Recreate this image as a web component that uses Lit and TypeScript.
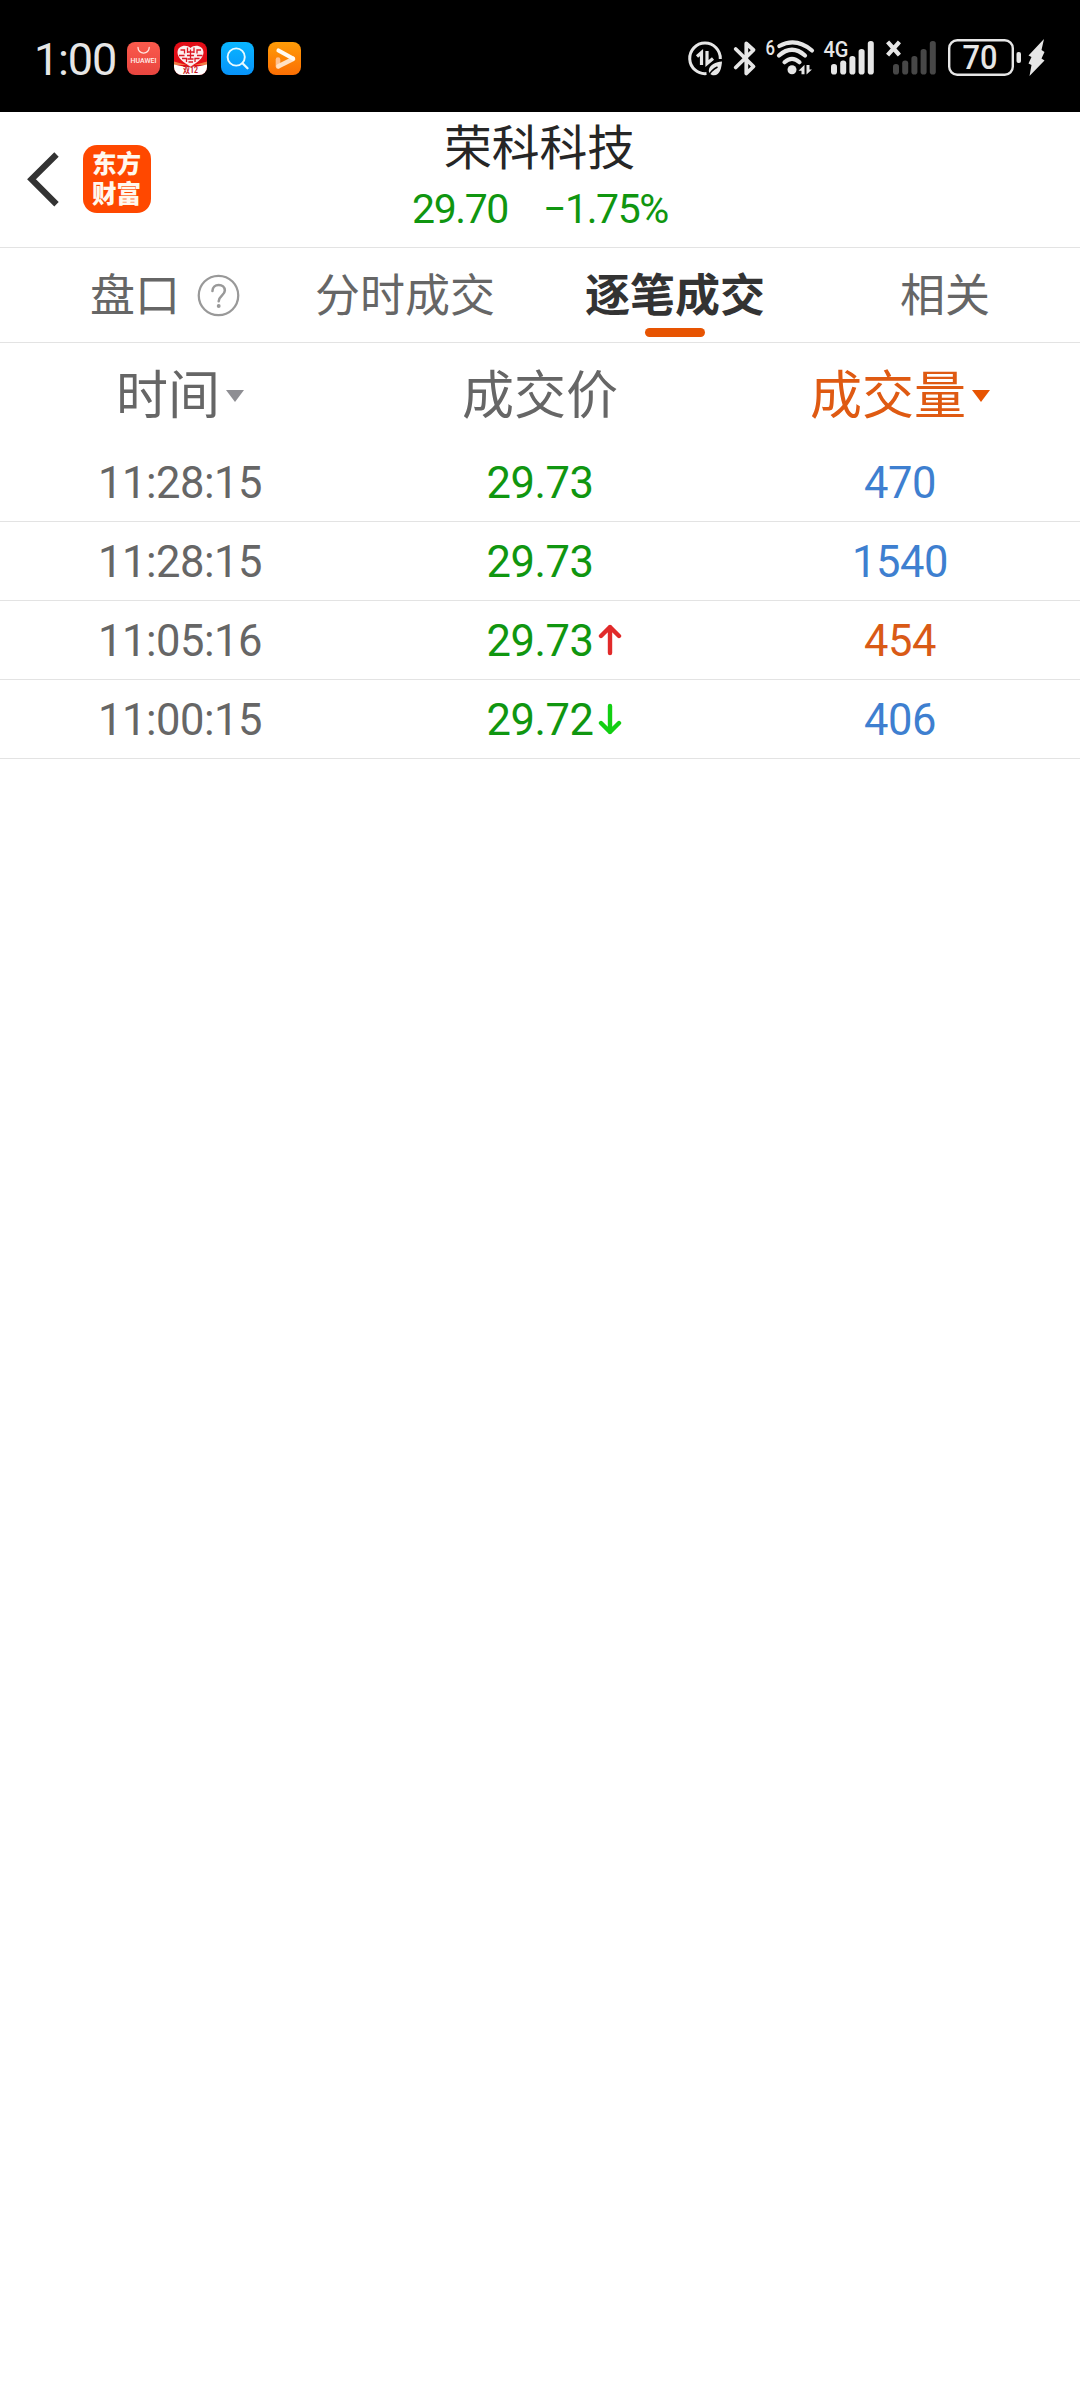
import { LitElement, html, css, svg, nothing } from "lit";
import { customElement, property } from "lit/decorators.js";

interface Trade {
  time: string;
  price: string;
  move?: "up" | "down";
  volume: string;
  side: "blue" | "orange";
}

const TRADES: Trade[] = [
  { time: "11:28:15", price: "29.73", volume: "470", side: "blue" },
  { time: "11:28:15", price: "29.73", volume: "1540", side: "blue" },
  { time: "11:05:16", price: "29.73", move: "up", volume: "454", side: "orange" },
  { time: "11:00:15", price: "29.72", move: "down", volume: "406", side: "blue" },
];

@customElement("status-bar")
class StatusBar extends LitElement {
  static styles = css`
    :host {
      display: flex;
      box-sizing: border-box;
      height: 112px;
      padding: 4px 34px 0 34px;
      align-items: center;
      justify-content: space-between;
      background: #000;
      color: #e6e6e6;
      font-family: Roboto, "Noto Sans CJK SC", sans-serif;
    }
    .left,
    .right {
      display: flex;
      align-items: center;
    }
    .clock {
      width: 93px;
      font-size: 45px;
      line-height: 40px;
      letter-spacing: -1.2px;
      white-space: nowrap;
      padding-top: 4px;
      box-sizing: border-box;
    }
    .apps {
      display: flex;
      gap: 14px;
      padding-top: 1px;
    }
    svg {
      display: block;
      overflow: visible;
    }
    .right {
      gap: 6px;
    }
  `;

  private bars(x: number, fill: string) {
    const tops = [64, 60.5, 56, 49, 41];
    return tops.map(
      (top, i) => svg`<rect x=${x + i * 9.2} y=${top} width="6" height=${74.5 - top} rx="2.8" fill=${fill} />`
    );
  }

  render() {
    return html`
      <div class="left">
        <div class="clock">1:00</div>
        <div class="apps">
          <svg width="33" height="33" viewBox="0 0 33 33">
            <defs>
              <linearGradient id="hw" x1="0" y1="0" x2="0" y2="1">
                <stop offset="0" stop-color="#fb5a4c" />
                <stop offset="1" stop-color="#e8453f" />
              </linearGradient>
            </defs>
            <rect width="33" height="33" rx="8" fill="url(#hw)" />
            <path d="M11 5.5a5.6 5.6 0 0 0 11.2 0" fill="none" stroke="#ffe5df" stroke-width="1.3" stroke-linecap="round" />
            <text x="3.5" y="21.3" font-size="7" font-weight="500" textLength="26" lengthAdjust="spacingAndGlyphs" fill="#fff0ec">HUAWEI</text>
          </svg>
          <svg width="33" height="33" viewBox="0 0 33 33">
            <defs>
              <clipPath id="c2"><rect width="33" height="33" rx="8" /></clipPath>
            </defs>
            <g clip-path="url(#c2)">
              <rect width="33" height="33" fill="#e30d17" />
              <path d="M0 19.5L16.5 24 33 19.5V23H0z" fill="#f07a45" />
              <path d="M0 22.5Q16.5 27 33 22.500V33H0z" fill="#fff" />
              <path d="M16.500 24.500C10 21 3.500 16 3.500 10.500 3.500 3 13 2 16.500 6 20 2 29.500 3 29.500 10.500 29.500 16 23 21 16.500 24.500z" fill="#fbeeee" />
              <path d="M6.500 8h4v3.500M13.500 5.500v5.500M20 5.500v5.500M23 11.500V8h4M5 13.500h5.500M23 13.500h5.500M8 16.500h4.500v3.500M25.500 16.500h-4.500v3.500M13 13.500h7M14 10h5.500M16.500 7.500v10M13.500 17h6M14.500 20h4.500" fill="none" stroke="#dd1a25" stroke-width="1.300" />
              <text x="9" y="31.300" font-size="8.500" font-weight="700" textLength="15" lengthAdjust="spacingAndGlyphs" fill="#c81420">双12</text>
            </g>
          </svg>
          <svg width="33" height="33" viewBox="0 0 33 33">
            <defs>
              <linearGradient id="br" x1="0" y1="0" x2="0" y2="1">
                <stop offset="0" stop-color="#09b6ff" />
                <stop offset="1" stop-color="#0793fa" />
              </linearGradient>
            </defs>
            <rect width="33" height="33" rx="8" fill="url(#br)" />
            <circle cx="15.200" cy="15" r="8.600" fill="none" stroke="#e8faff" stroke-width="1.900" />
            <path d="M21.500 21.300l5 5" stroke="#e8faff" stroke-width="2.300" stroke-linecap="round" />
          </svg>
          <svg width="33" height="33" viewBox="0 0 33 33">
            <defs>
              <linearGradient id="vd" x1="0" y1="0" x2="0" y2="1">
                <stop offset="0" stop-color="#ff9c07" />
                <stop offset="1" stop-color="#fb6e03" />
              </linearGradient>
            </defs>
            <rect width="33" height="33" rx="8" fill="url(#vd)" />
            <path d="M10 24.500V17.500" stroke="#ffc08e" stroke-width="4.600" stroke-linecap="round" />
            <path d="M10.500 24.300L25 17" stroke="#ffe1c4" stroke-width="4.600" stroke-linecap="round" />
            <path d="M10.500 8.500L25 16.500" stroke="#fffaf2" stroke-width="4.200" stroke-linecap="round" />
          </svg>
        </div>
      </div>
      <div class="right">
        <svg width="40" height="40" viewBox="686 38 40 40">
          <path d="M706.500 73.600A15.300 15.300 0 1 1 720.300 59" fill="none" stroke="#e6e6e6" stroke-width="3" />
          <path d="M697 56.500l4.500-4v12.500M707 51v12.500l6-5" fill="none" stroke="#e6e6e6" stroke-width="3.200" />
          <path d="M722 61.500C716 62 709 64.500 708.800 70.500 708.800 73.500 711 75.300 714 75.300 720 75 721.500 68 722 61.500z" fill="#e6e6e6" />
          <path d="M708 76.500C710.500 71.500 713.500 69 717.500 67" fill="none" stroke="#000" stroke-width="1.400" />
        </svg>
        <svg width="26" height="40" viewBox="732 38 26 40">
          <path d="M735.700 49L753.500 66.500 746.300 73.500V43.500L753.500 50 735.700 67.500" fill="none" stroke="#e6e6e6" stroke-width="3.800" stroke-linecap="round" stroke-linejoin="round" />
        </svg>
        <svg width="52" height="40" viewBox="764 38 52 40">
          <text x="765.500" y="54.800" font-size="21" font-weight="500" textLength="9.500" lengthAdjust="spacingAndGlyphs" fill="#e6e6e6">6</text>
          <g fill="none" stroke="#e6e6e6" stroke-width="4.200" stroke-linecap="round">
            <path d="M779.300 46Q796 37 812 50.500" />
            <path d="M779 55.500Q792 44 805 55.500" />
            <path d="M784.500 62.200Q792 55.500 799.500 62.200" />
          </g>
          <circle cx="792" cy="69.800" r="4.500" fill="#e6e6e6" />
          <path d="M798.500 70.800l6-6v9.500h-3v-3.500zM806.500 65v9.500l5.500-5h-2.500v-4.500z" fill="#e6e6e6" />
        </svg>
        <svg width="54" height="40" viewBox="822 38 54 40">
          <text x="823.500" y="56.500" font-size="22" font-weight="500" textLength="25" lengthAdjust="spacingAndGlyphs" fill="#e6e6e6">4G</text>
          ${this.bars(831, "#e6e6e6")}
        </svg>
        <svg width="56" height="40" viewBox="882 38 56 40">
          ${this.bars(893, "#474747")}
          <path d="M889 43.500L898 53.500M898 43.500L889 53.500" stroke="#e6e6e6" stroke-width="4.200" stroke-linecap="square" />
        </svg>
        <svg width="102" height="40" viewBox="944 38 102 40">
          <rect x="949.200" y="40.200" width="63.600" height="34.600" rx="8" fill="none" stroke="#e6e6e6" stroke-width="2.400" />
          <rect x="1016.500" y="52" width="4.500" height="11" rx="2" fill="#e6e6e6" />
          <text x="962.500" y="69.200" font-size="32.500" font-weight="500" textLength="35" lengthAdjust="spacingAndGlyphs" fill="#e6e6e6">70</text>
          <path d="M1044 39L1028.500 55.500 1031.500 57 1028.500 63.500 1031.500 65 1029.500 76 1044.500 60.500 1041.500 58.500 1044.500 52 1041.500 50z" fill="#e6e6e6" />
        </svg>
      </div>
    `;
  }
}

@customElement("stock-header")
class StockHeader extends LitElement {
  static styles = css`
    :host {
      display: grid;
      grid-template-columns: 270px 540px 270px;
      box-sizing: border-box;
      height: 136px;
      border-bottom: 1px solid #e3e3e3;
      background: #fff;
    }
    .nav {
      display: flex;
      align-items: center;
      gap: 22px;
      padding: 0 0 1px 25px;
    }
    svg {
      display: block;
    }
    .title {
      display: flex;
      flex-direction: column;
      align-items: center;
    }
    .name {
      font: 400 47.8px/68px "Noto Sans CJK SC", sans-serif;
      color: #262626;
      padding-right: 1px;
      margin-top: -1px;
    }
    .quote {
      display: flex;
      gap: 35px;
      padding-top: 6px;
      font: 400 41px/48px Roboto, sans-serif;
      letter-spacing: -1.4px;
      color: #109610;
    }
  `;

  render() {
    return html`
      <div class="nav">
        <svg width="36" height="58" viewBox="25 150 36 58">
          <path d="M56.500 154.500L31.500 179.300L56.500 204.300" fill="none" stroke="#333" stroke-width="6.200" />
        </svg>
        <svg width="68" height="68" viewBox="0 0 68 68">
          <rect width="68" height="68" rx="14" fill="#ff4800" />
          <text font-family="'Noto Sans CJK SC', sans-serif" font-size="24.500" font-weight="900" fill="#fff8ee">
            <tspan x="9" y="28">东方</tspan><tspan x="9" y="57.500">财富</tspan>
          </text>
        </svg>
      </div>
      <div class="title">
        <div class="name">荣科科技</div>
        <div class="quote"><span>29.70</span><span>−1.75%</span></div>
      </div>
    `;
  }
}

@customElement("section-tabs")
class SectionTabs extends LitElement {
  static styles = css`
    :host {
      display: grid;
      grid-template-columns: repeat(4, 1fr);
      box-sizing: border-box;
      height: 95px;
      border-bottom: 1px solid #e3e3e3;
      font: 400 45px/66px "Noto Sans CJK SC", sans-serif;
      color: #666;
    }
    .tab {
      display: flex;
      flex-direction: column;
      align-items: center;
      padding-top: 12px;
    }
    .label {
      display: flex;
      align-items: center;
      white-space: nowrap;
    }
    .active {
      font-weight: 700;
      color: #333;
    }
    .help {
      display: block;
      margin: 4px -60px 0 17px;
    }
    .mark {
      width: 60px;
      height: 9px;
      margin-top: 2px;
      border-radius: 4.500px;
      background: #e75402;
    }
  `;

  render() {
    return html`
      <div class="tab">
        <div class="label">
          盘口
          <svg class="help" width="43" height="43" viewBox="0 0 44 44">
            <circle cx="22" cy="22" r="20.200" fill="none" stroke="#999" stroke-width="2.300" />
            <path d="M15.800 17.500c0-4 2.800-6.300 6.400-6.300s6.300 2.300 6.300 5.700c0 5-6.300 5.600-6.300 11" fill="none" stroke="#999" stroke-width="2.600" stroke-linecap="round" />
            <circle cx="22.200" cy="32.800" r="2" fill="#999" />
          </svg>
        </div>
      </div>
      <div class="tab"><div class="label">分时成交</div></div>
      <div class="tab active">
        <div class="label">逐笔成交</div>
        <div class="mark"></div>
      </div>
      <div class="tab"><div class="label">相关</div></div>
    `;
  }
}

@customElement("trade-row")
class TradeRow extends LitElement {
  @property({ attribute: false }) trade!: Trade;

  static styles = css`
    :host {
      display: grid;
      grid-template-columns: repeat(3, 1fr);
      box-sizing: border-box;
      height: 79px;
      border-bottom: 1px solid #e3e3e3;
      font: 400 43.5px/52px Roboto, sans-serif;
      letter-spacing: -0.5px;
      color: #666;
    }
    .cell {
      display: flex;
      align-items: center;
      justify-content: center;
      padding-top: 4px;
    }
    .price {
      color: #109610;
    }
    .blue {
      color: #3e7fd0;
    }
    .orange {
      color: #d95a16;
    }
    .arrow {
      display: block;
      margin: 0 -29px 4px 5px;
    }
  `;

  private arrow(move?: "up" | "down") {
    if (!move) return nothing;
    const up = move === "up";
    return html`<svg class="arrow" width="24" height="32" viewBox="0 0 24 32">
      <path
        d=${up ? "M12 29V3M3 12L12 3L21 12" : "M12 3V29M3 20L12 29L21 20"}
        fill="none"
        stroke=${up ? "#e12a2a" : "#12cf12"}
        stroke-width="4.400"
        stroke-linecap="round"
        stroke-linejoin="round"
      />
    </svg>`;
  }

  render() {
    const t = this.trade;
    return html`
      <div class="cell">${t.time}</div>
      <div class="cell price">${t.price}${this.arrow(t.move)}</div>
      <div class="cell ${t.side}">${t.volume}</div>
    `;
  }
}

@customElement("app-root")
class AppRoot extends LitElement {
  static styles = css`
    :host {
      display: block;
      width: 1080px;
      height: 2400px;
      overflow: hidden;
      background: #fff;
    }
    .head {
      display: grid;
      grid-template-columns: repeat(3, 1fr);
      box-sizing: border-box;
      height: 100px;
      padding-bottom: 2px;
      font: 400 52px/76px "Noto Sans CJK SC", sans-serif;
      color: #666;
    }
    .col {
      display: flex;
      align-items: center;
      justify-content: center;
      gap: 6px;
    }
    .caret {
      width: 18px;
      height: 12px;
      margin-top: 8px;
      background: #8e8e93;
      clip-path: polygon(0 0, 100% 0, 50% 100%);
    }
    .sorted {
      color: #df5a12;
    }
    .sorted .caret {
      background: #e75402;
    }
  `;

  render() {
    return html`
      <status-bar></status-bar>
      <stock-header></stock-header>
      <section-tabs></section-tabs>
      <div class="head">
        <div class="col">时间<span class="caret"></span></div>
        <div class="col">成交价</div>
        <div class="col sorted">成交量<span class="caret"></span></div>
      </div>
      ${TRADES.map((t) => html`<trade-row .trade=${t}></trade-row>`)}
    `;
  }
}
